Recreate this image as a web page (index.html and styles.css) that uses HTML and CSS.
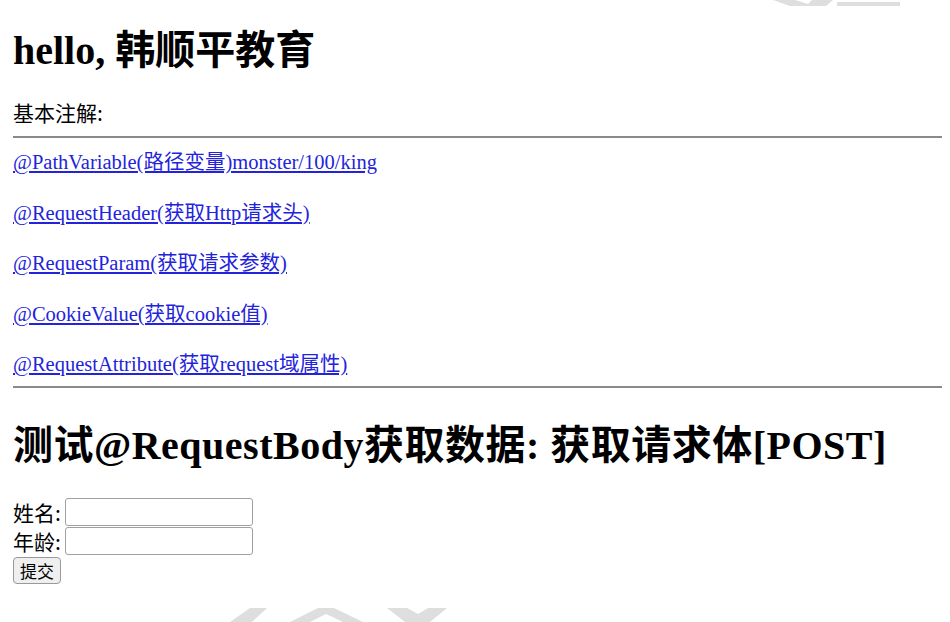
FILE: index.html
```html
<!DOCTYPE html>
<html lang="zh-CN">
<head>
  <meta charset="UTF-8" />
  <title>hello</title>
  <link rel="stylesheet" href="styles.css">
</head>
<body>
  <h1 class="title">hello, 韩顺平教育</h1>
  <div class="intro">基本注解:</div>
  <hr/>
  <div class="links">
    <a href="#">@PathVariable(路径变量)monster/100/king</a>
    <a href="#">@RequestHeader(获取Http请求头)</a>
    <a href="#">@RequestParam(获取请求参数)</a>
    <a href="#">@CookieValue(获取cookie值)</a>
    <a href="#">@RequestAttribute(获取request域属性)</a>
  </div>
  <hr class="end"/>
  <h1 class="title second">测试@RequestBody获取数据: 获取请求体[POST]</h1>
  <form class="save-form">
    <label>姓名:<input type="text" name="name"/></label>
    <label>年龄:<input type="text" name="age"/></label>
    <button type="button">提交</button>
  </form>

  <!-- watermark -->
  <svg class="watermark" width="950" height="622" viewBox="0 0 950 622">
    <polygon points="773,0 795,0 808,4 812,0 833,0 826,6 790,6"/>
    <polygon points="837,2 900,2 900,6 837,6"/>
    <polygon points="250,608 267,608 252,622 230,622"/>
    <polygon points="290,622 318,608 334,608 363,622 343,622 326,614 310,622"/>
    <polygon points="387,608 407,608 418,614 428,608 447,608 430,622 405,622"/>
  </svg>
</body>
</html>
```

FILE: styles.css
```css
body {
  margin: 0;
  padding: 0 8px 0 13px;
  font-family: "Liberation Serif", "Noto Sans CJK SC", serif;
  font-size: 21px;
  color: #000;
  background: #fff;
}

.title {
  font-size: 40px;
  line-height: 48px;
  margin: 27px 0 25px;
  font-weight: bold;
}

.intro {
  font-family: "Noto Sans CJK SC", sans-serif;
  line-height: 25px;
}

hr {
  border: none;
  border-top: 2px solid #8a8a8a;
  margin: 11px 0 10px;
}

hr.end {
  margin-top: 8px;
}

.links {
  display: flex;
  flex-direction: column;
  align-items: flex-start;
  gap: 25px;
  padding-top: 2px;
  font-size: 20.5px;
}

.links a {
  color: #2323dc;
  line-height: 25.5px;
}

.second {
  margin: 34px 0 28px;
  letter-spacing: 0.5px;
}

.save-form {
  display: flex;
  flex-direction: column;
  align-items: flex-start;
  gap: 1px;
  font-family: "Noto Sans CJK SC", sans-serif;
  font-size: 21px;
}

.save-form label {
  display: flex;
  align-items: center;
  line-height: 28px;
}

.save-form input {
  width: 188px;
  height: 28px;
  box-sizing: border-box;
  margin: 0 0 0 4px;
  border: 1px solid #a0a0a0;
  border-radius: 3px;
  padding: 1px 3px;
}

.save-form button {
  margin-top: 1px;
  height: 27px;
  padding: 0 6px;
  font-family: "Noto Sans CJK SC", sans-serif;
  font-size: 17px;
  background: #efefef;
  border: 1px solid #999;
  border-radius: 4px;
  color: #000;
}

.watermark {
  position: absolute;
  top: 0;
  left: 0;
  pointer-events: none;
  fill: #dedede;
}
```
